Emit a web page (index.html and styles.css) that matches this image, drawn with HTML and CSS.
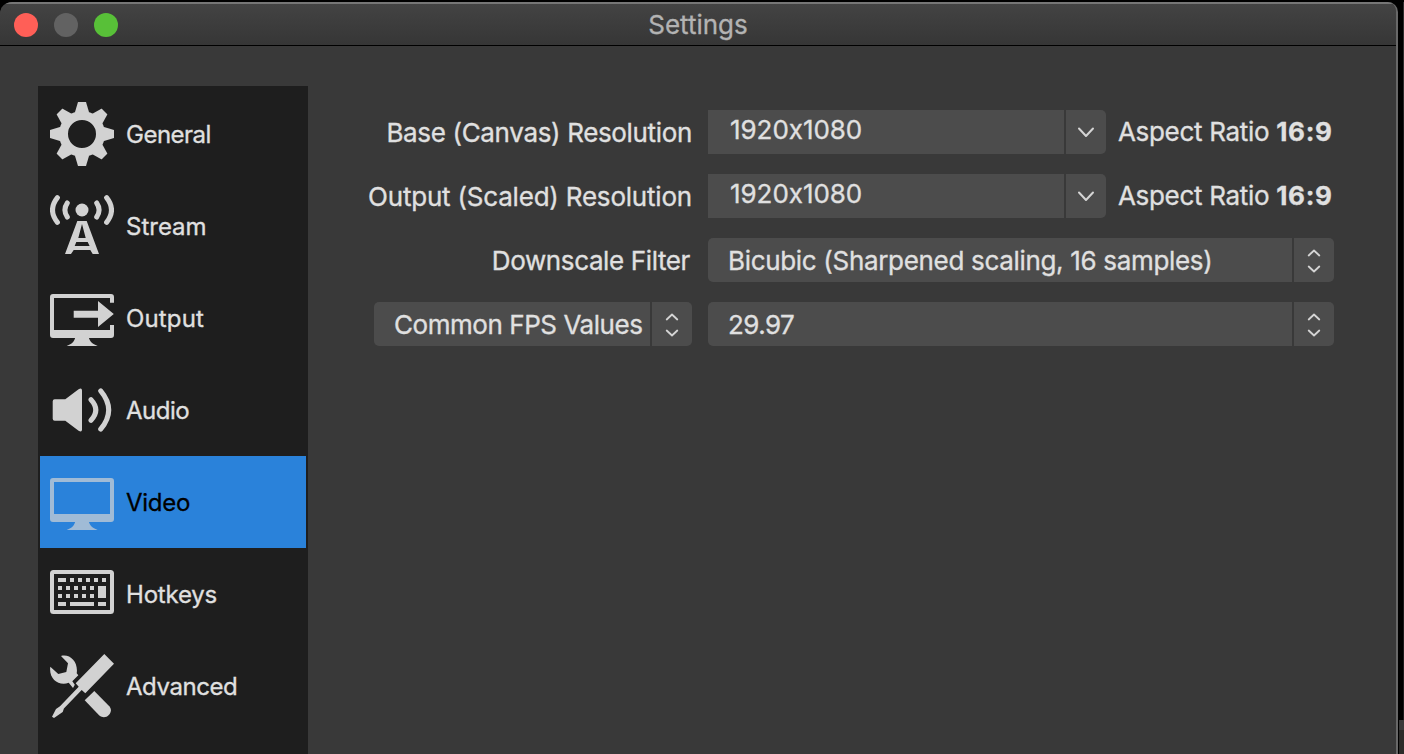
FILE: index.html
```html
<!DOCTYPE html>
<html lang="en">
<head>
<meta charset="utf-8">
<title>Settings</title>
<link rel="stylesheet" href="styles.css">
</head>
<body>
<svg class="defs" aria-hidden="true">
  <symbol id="chevron" viewBox="0 0 40 44"><path d="M13 18.5l7 7.5 7-7.5" fill="none" stroke="currentColor" stroke-width="2" stroke-linecap="round" stroke-linejoin="round"/></symbol>
  <symbol id="updown" viewBox="0 0 40 44"><path d="M14.7 17.5l5.3-5 5.3 5M14.7 28.5l5.3 5 5.3-5" fill="none" stroke="currentColor" stroke-width="1.8" stroke-linecap="round" stroke-linejoin="round"/></symbol>
  <symbol id="stand" viewBox="0 0 64 64"><path d="M25.3 51C24.8 55.5 21 58.5 16.7 60H47.7C43.5 58.5 39.3 55.5 38.7 51Z"/></symbol>
  <symbol id="tooth" viewBox="0 0 64 64"><path d="M24.8 10.8L28 0H36L39.2 10.8Z"/></symbol>
</svg>
<div class="window">
  <header class="titlebar">
    <div class="lights"><i class="light red"></i><i class="light gray"></i><i class="light green"></i></div>
    <h1 class="title">Settings</h1>
  </header>
  <main class="content">
    <nav class="sidebar">
      <a class="item">
        <svg class="icon" viewBox="0 0 64 64">
          <circle cx="32" cy="32" r="18.5" fill="none" stroke="currentColor" stroke-width="9"/>
          <use href="#tooth"/><use href="#tooth" transform="rotate(45 32 32)"/><use href="#tooth" transform="rotate(90 32 32)"/><use href="#tooth" transform="rotate(135 32 32)"/><use href="#tooth" transform="rotate(180 32 32)"/><use href="#tooth" transform="rotate(225 32 32)"/><use href="#tooth" transform="rotate(270 32 32)"/><use href="#tooth" transform="rotate(315 32 32)"/>
        </svg><span class="general">General</span></a>
      <a class="item">
        <svg class="icon" viewBox="0 0 64 64">
          <circle cx="32" cy="16" r="6.5"/>
          <path d="M7.4 3.6Q-2.4 16 7.4 28.4M56.6 3.6Q66.4 16 56.6 28.4M17.3 9Q12.5 16 17.3 23M46.7 9Q51.5 16 46.7 23" fill="none" stroke="currentColor" stroke-width="5" stroke-linecap="round"/>
          <path fill-rule="evenodd" d="M27.3 27H36.7L49 60H42.7L40.3 56H23.7L21 60H15ZM32 30L28.3 44H35.7ZM26.3 48L24.7 52H39.6L37.7 48Z"/>
        </svg><span class="stream">Stream</span></a>
      <a class="item">
        <svg class="icon" viewBox="0 0 64 64">
          <path d="M64 16.7H60V12H4V44H60V39H64V49Q64 52 61 52H3Q0 52 0 49V11Q0 8 3 8H61Q64 8 64 11Z"/>
          <use href="#stand"/><path d="M23.7 24.7H48V15L63.8 28 48 41V31.7H23.7Z"/>
        </svg><span class="output">Output</span></a>
      <a class="item">
        <svg class="icon" viewBox="0 0 64 64">
          <path d="M4.7 21.3H15.3L28.6 11.2Q32 9.5 32 12.5V51.5Q32 54.5 28.6 52.8L15.3 42.7H4.7Q2.7 42.7 2.7 40.7V23.3Q2.7 21.3 4.7 21.3Z"/>
          <path d="M41 21.7Q50.6 32 41 42.3M50.7 12.8Q66.7 32 50.7 51.2" fill="none" stroke="currentColor" stroke-width="5" stroke-linecap="round"/>
        </svg><span class="audio">Audio</span></a>
      <a class="item selected">
        <svg class="icon" viewBox="0 0 64 64">
          <path fill-rule="evenodd" d="M3 8H61Q64 8 64 11V49Q64 52 61 52H3Q0 52 0 49V11Q0 8 3 8ZM4 12V44H60V12Z"/><use href="#stand"/>
        </svg><span class="video">Video</span></a>
      <a class="item">
        <svg class="icon" viewBox="0 0 64 64">
          <rect x="2" y="10" width="60" height="40" rx="1.5" fill="none" stroke="currentColor" stroke-width="4"/>
          <path d="M8 16h8v4H8zM20 16h4v4h-4zM28 16h4v4h-4zM36 16h4v4h-4zM44 16h4v4h-4zM52 16h4v4h-4zM8 24h4v4H8zM16 24h4v4h-4zM24 24h4v4h-4zM32 24h4v4h-4zM40 24h4v4h-4zM48 24h8v12h-8zM8 32h4v4H8zM16 32h4v4h-4zM24 32h4v4h-4zM32 32h4v4h-4zM40 32h4v4h-4zM8 40h8v4H8zM20 40h24v4H20zM48 40h8v4h-8z"/>
        </svg><span class="hotkeys">Hotkeys</span></a>
      <a class="item">
        <svg class="icon" viewBox="0 0 64 64">
          <path d="M54.3 0L64 9.7 35.3 39.3 31.7 36 13.9 54.6 12.7 58 4 64 2 62.7 6 55 10 52.3 28.7 32.7 25.7 29.3Z"/>
          <path d="M44.3 37L59.3 52.2C64.5 58 56 67 49.3 61.5L34.7 46.3Z"/>
          <path d="M11 2C20 -.5 28.5 8 26.7 19.3L28.3 21.3 22.3 27.3 24.8 30.7 23 34 18.7 28.8C9 32.5-1.5 25 .3 12.7L8.3 20 16.3 18 18 9.3Z"/>
        </svg><span class="advanced">Advanced</span></a>
    </nav>
    <form class="form">
      <div class="row">
        <label class="label base">Base (Canvas) Resolution</label>
        <div class="field editable">1920x1080</div><svg class="arrow"><use href="#chevron"/></svg>
        <div class="ratio">Aspect Ratio <b>16:9</b></div>
      </div>
      <div class="row">
        <label class="label scaled">Output (Scaled) Resolution</label>
        <div class="field editable">1920x1080</div><svg class="arrow"><use href="#chevron"/></svg>
        <div class="ratio">Aspect Ratio <b>16:9</b></div>
      </div>
      <div class="row">
        <label class="label downscale">Downscale Filter</label>
        <div class="field">Bicubic (Sharpened scaling, 16 samples)</div><svg class="arrow"><use href="#updown"/></svg>
      </div>
      <div class="row">
        <div class="common"><div class="field">Common FPS Values</div><svg class="arrow"><use href="#updown"/></svg></div>
        <div class="field rate">29.97</div><svg class="arrow"><use href="#updown"/></svg>
      </div>
    </form>
  </main>
</div>
<div class="desktop"></div>
</body>
</html>
```
FILE: styles.css
```css
* { box-sizing: border-box; }
body { margin: 0; height: 754px; overflow: hidden; display: flex; padding-top: 2px; background: #000; color: #e0e0e0; font: 26px/44px Inter, "Liberation Sans", sans-serif; font-feature-settings: "calt" 0; -webkit-text-stroke: 0.3px currentColor; }
.defs { position: absolute; width: 0; height: 0; }
.window { flex: none; width: 1398px; height: 760px; background: #393939; border-right: 2px solid #686868; border-radius: 12px 10px 0 0; overflow: hidden; }
.titlebar { height: 44px; display: flex; align-items: center; border-top: 2px solid #767676; border-bottom: 1px solid #000; background: linear-gradient(#434343, #363636); }
.lights { display: flex; gap: 16px; width: 118px; padding-left: 14px; }
.light { width: 24px; height: 24px; border-radius: 50%; }
.red { background: #ff5f57; }
.gray { background: #626262; }
.green { background: #58c038; }
.title { flex: 1; margin: 0 118px 0 0; text-align: center; font-size: 26px; font-weight: 400; line-height: 40px; color: #b3b3b3; }
.content { display: flex; padding: 40px 0 0 38px; }
.sidebar { width: 270px; height: 680px; padding: 2px; background: #1e1e1e; font-size: 24px; line-height: 46px; }
.item { display: flex; align-items: center; gap: 12px; height: 92px; padding-left: 10px; }
.item span { padding-top: 2px; }
.icon { width: 64px; height: 64px; color: #d2d2d2; fill: currentColor; }
.selected { background: #2a82da; color: #000; }
.selected .icon { color: #a0bbd6; }
.general { letter-spacing: -0.5px; }
.stream { letter-spacing: 0; }
.output { letter-spacing: 0.15px; }
.audio { letter-spacing: -0.5px; }
.video { letter-spacing: -0.25px; }
.hotkeys { letter-spacing: -0.2px; }
.advanced { letter-spacing: -0.45px; }
.form { display: flex; flex-direction: column; gap: 20px; padding: 24px 0 0 60px; }
.row { display: flex; width: 966px; height: 44px; }
.label { width: 324px; margin-right: 16px; text-align: right; white-space: nowrap; line-height: 46px; }
.base { letter-spacing: -0.34px; }
.scaled { letter-spacing: -0.2px; }
.downscale { padding-right: 2px; letter-spacing: -0.38px; }
.field { flex: 1; padding-left: 20px; border-radius: 5px 0 0 5px; background: #4c4c4c; white-space: nowrap; line-height: 46px; letter-spacing: -0.32px; }
.editable { flex: none; width: 356px; padding-left: 22px; border-radius: 0; line-height: 40px; letter-spacing: -0.05px; }
.arrow { width: 40px; height: 44px; margin-left: 2px; border-radius: 0 5px 5px 0; background: #4c4c4c; color: #d4d4d4; }
.ratio { padding-left: 12px; white-space: nowrap; letter-spacing: -0.32px; }
.ratio b { letter-spacing: 0.7px; }
.common { display: flex; width: 318px; margin: 0 16px 0 6px; }
.common .field { letter-spacing: -0.45px; }
.rate { letter-spacing: -0.55px; }
.desktop { flex: 1; margin-left: 1px; background: linear-gradient(#2e2e2e 90px, #1c1c1c 130px, #1c1c1c 718px, #3a3a3a 718px, #3a3a3a 728px, #2c2b29 728px); clip-path: polygon(4px 0, 100% 0, 100% 100%, 0 100%, 0 718px, 4px 718px); }
```
